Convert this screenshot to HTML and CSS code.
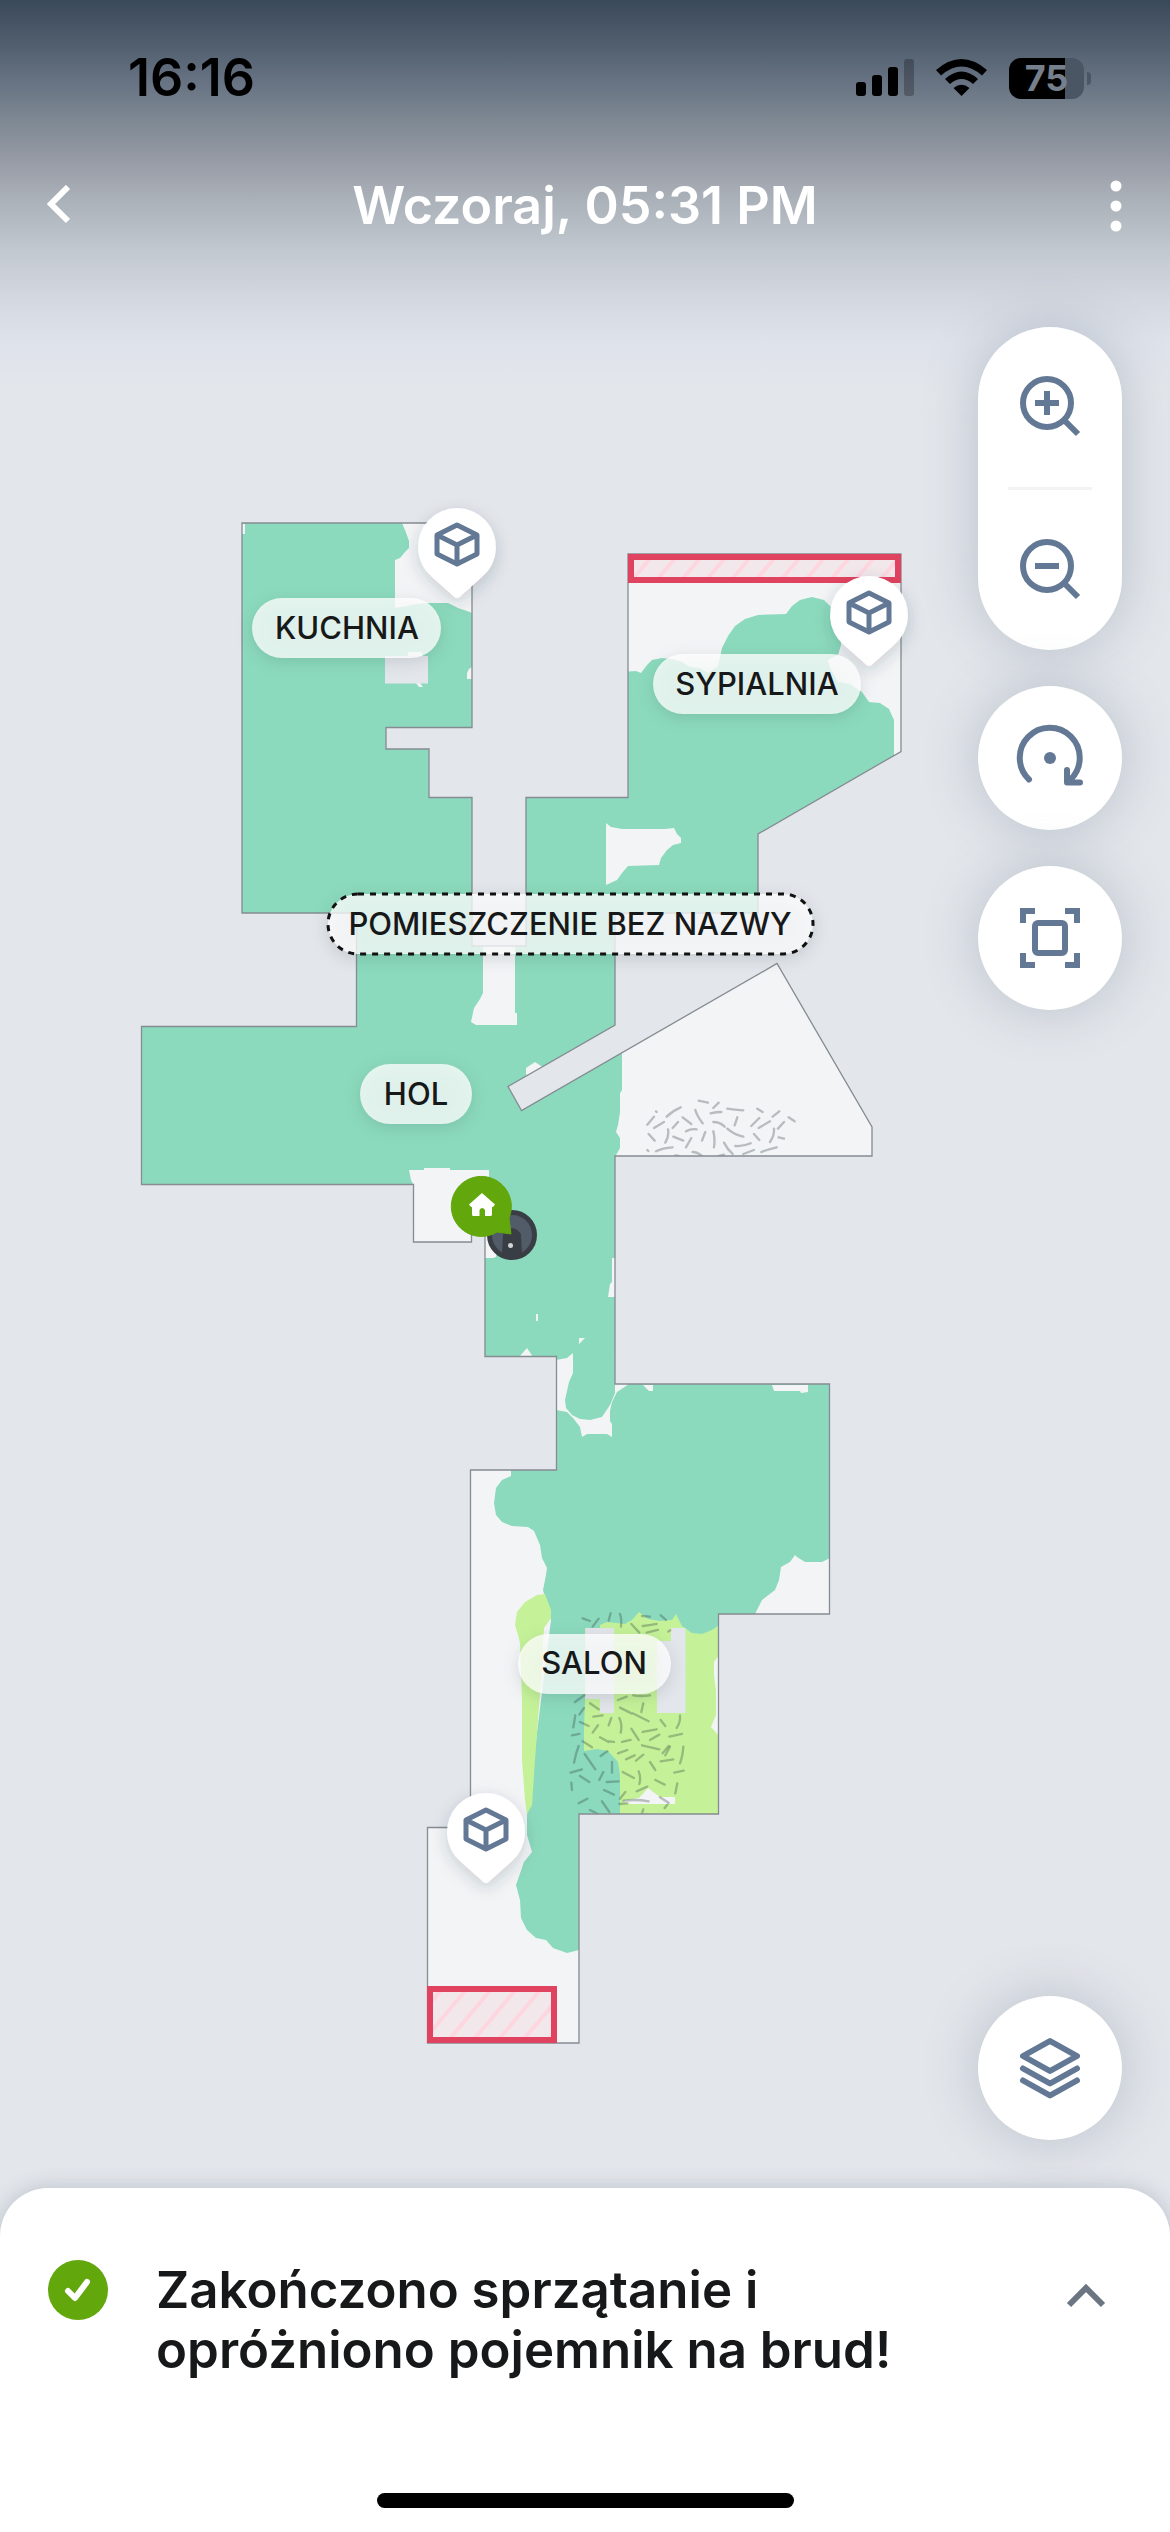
FILE: index.html
```html
<!DOCTYPE html>
<html lang="pl">
<head>
<meta charset="utf-8">
<meta name="viewport" content="width=device-width, initial-scale=1">
<title>Historia sprzątania</title>
<link rel="stylesheet" href="styles.css">
</head>
<body>
<div class="screen">
  <header class="top">
    <div class="status">
      <span class="time">16:16</span>
      <div class="indicators">
        <svg width="58" height="38" viewBox="0 0 58 38" aria-hidden="true">
          <rect x="0" y="23" width="10" height="14" rx="3"/>
          <rect x="16" y="16" width="10" height="21" rx="3"/>
          <rect x="32" y="8" width="10" height="29" rx="3"/>
          <rect x="48" y="0" width="10" height="37" rx="3" opacity=".25"/>
        </svg>
        <svg width="51" height="38" viewBox="0 0 51 38" aria-hidden="true">
          <path d="M0 11Q25.500-11 51 11L46 16.500Q25.500-1.500 5 16.500Z"/>
          <path d="M9 20Q25.500 5 42 20L37 25Q25.500 15 14 25Z"/>
          <path d="M17.500 29Q25.500 22.500 33.500 29L25.500 37Z"/>
        </svg>
        <div class="battery">
          <span class="battery-body"><span class="level">75</span></span>
          <span class="battery-cap"></span>
        </div>
      </div>
    </div>
    <nav class="nav">
      <button class="nav-btn" aria-label="Wstecz">
        <svg width="24" height="42" viewBox="0 0 24 42"><path d="M21 2L4 19L21 36" fill="none" stroke="#fff" stroke-width="6"/></svg>
      </button>
      <h1 class="title">Wczoraj, 05:31 PM</h1>
      <button class="nav-btn nav-end" aria-label="Więcej">
        <svg width="14" height="54" viewBox="0 0 14 54" fill="#fff"><circle cx="7" cy="7" r="5.500"/><circle cx="7" cy="27" r="5.500"/><circle cx="7" cy="47" r="5.500"/></svg>
      </button>
    </nav>
  </header>

  <main class="main">
    <svg class="map" viewBox="0 256 1170 1932" role="img" aria-label="Mapa mieszkania">
      <defs>
        <path id="outline" d="M242 523H472V727.500H386V749H429V797.500H472V946H526V797.500H628V554H901V751.500L758 834V913H615V1025L508 1086.500L521.500 1110.500L777 963.500L872 1127V1156H615V1384H829.500V1614H718.500V1814H579V2043H427.500V1827.500H470.500V1470H556.500V1356.500H485V1225H471.500V1242H413.500V1184.500H141.500V1026.500H356.500V913H242Z"/>
        <clipPath id="floor"><use href="#outline"/></clipPath>
        <pattern id="hatch" width="19" height="19" patternUnits="userSpaceOnUse" patternTransform="rotate(40)">
          <rect width="19" height="19" fill="#f2e8eb"/>
          <rect width="4" height="19" fill="#fdd6e0"/>
        </pattern>
        <filter id="soft" x="-40%" y="-60%" width="180%" height="220%">
          <feDropShadow dx="0" dy="5" stdDeviation="8" flood-color="#1b3346" flood-opacity=".2"/>
        </filter>
        <g id="box-pin">
          <path d="M-25 30A39 39 0 1 1 25 30L2.500 50Q0 52-2.500 50Z" fill="#fff" filter="url(#soft)"/>
          <path d="M0-22L20-12V7L0 17L-20 7V-12ZM-20-12L0-2L20-12M0-2V17" fill="none" stroke="#637894" stroke-width="5" stroke-linejoin="round"/>
        </g>
      </defs>

      <g clip-path="url(#floor)">
        <rect class="clean" x="140" y="520" width="770" height="1530"/>

        <g class="missed">
          <path d="M402 523L405 530L409 541V548L405 552L400 558L395 560V608L406 606L415 604L430 603H448L458 608L467 611L472 613V523Z"/>
          <path d="M242 524H245V534H242ZM408 652H422V657H408ZM472 667L469 669L467 673V679H472ZM416 683H420L423 687H419Z"/>
          <path d="M628 671.500L636 671L641 673L647 665L652 660L662 658L672 659L682 662L690 667L700 668L708 673L718 666L722 648L728 636L735 626L745 619L758 615L786 614L792 606L800 600L812 597L824 600L832 608L840 625L841 645L838 655L828 660L830 668L838 682L850 684L862 692L869 702L880 703L889 709L894 720V755L901 756V554H628Z"/>
          <path d="M606 823L611 827L622 829H665L674 828L677 834L681 838V843L673 845L667 850L661 858L659 865L628 866L622 873L617 880L606 885Z"/>
          <path d="M483 946H515V1013H517V1025H476L471 1022L474 1008L480 999L483 993Z"/>
          <path d="M526 1068L535 1062L544 1068L530 1078L526 1074Z"/>
          <path d="M622 1040V1090L620 1093V1112L618 1125L616 1132L620 1138V1148L615 1157H875V950H700Z"/>
          <path d="M409 1170L424 1170L424 1168H450V1170H489V1176L485 1190H497V1240L496 1257L493 1258H485V1245H413V1184L411 1180Z"/>
          <path d="M612 1258H615V1297H608L610 1284L612 1282ZM536 1314H538V1321H536ZM579 1338H585L579 1344ZM519 1357L527 1348L533 1357Z"/>
          <path d="M556 1360L567 1358L573 1353V1373L569 1382L565 1400L566 1408L572 1415L580 1419L590 1420L602 1417L610 1405L615 1393V1384H629L617 1392L612 1402L610 1411V1421L612 1424V1437L607 1434H587L582 1437L580 1427L573 1418L567 1412L556 1410Z"/>
          <path d="M643 1385H653V1391H649ZM772 1385H808V1392L801 1393L800 1391H774Z"/>
          <path d="M470 1470H511V1476L502 1480L496 1488L494 1503L496 1515L502 1522L512 1526L528 1527L534 1531L540 1545L542 1558L547 1568L546 1575L543 1590L551 1620L527 1813V1835L532 1852L524 1862L516 1885L520 1900L521 1918L527 1930L536 1938L546 1940L553 1948L567 1953L579 1950V2045H420V1470Z"/>
          <path d="M830 1558L822 1562L805 1562L797 1557L795 1555L790 1562L781 1567L779 1580L775 1590L762 1600L755 1614H830Z"/>
        </g>

        <g class="extra">
          <path d="M545 1594L537 1595L525 1602L517 1612L515 1625L518 1635L520 1643L522 1700V1760L525 1800L527 1814L532 1805L535 1760L538 1720L541 1680L544 1628L551 1618V1610Z"/>
          <path d="M600 1625L607 1622L625 1624L632 1620L639 1612L648 1619L660 1621L672 1620L676 1614L682 1626L692 1633L702 1634L712 1630L719 1625V1815H620V1775L618 1762L608 1751L597 1749L584 1751L584 1730L585 1700V1628H600Z"/>
        </g>
        <path class="missed" d="M719 1655L714 1662V1675L716 1690V1715L711 1727L719 1736ZM622 1801L639 1798L648 1788L660 1797H675V1804H630Z"/>

        <g class="furniture">
          <path d="M385 656H428V683.500H385Z"/>
          <path d="M585.500 1628H614V1713H600V1699H585.500ZM671 1628H685.500V1713H657V1641H671Z"/>
        </g>

        <g class="carpet" transform="translate(420 1360) scale(.3333)">
          <path d="M488 775l22 8M518 800l18-24M566 782l6-22M600 762q6 15 3 38M666 768l24 2M722 766l16 14M634 792l24 26M668 798q20-1 42-6M680 818l34-8M745 815l6-4M465 1026l28-20M594 1020l26-10M640 1006q25 4 50 0M510 1030l26 18M600 1043l36 18M638 1060l48 24M664 1056l6-26M520 1070l28-4M460 1102l6-36M478 1064l14-20M480 1086l26 12M518 1118l16-22M566 1096l8-22M598 1074q10 20 4 44M722 1080l14 18M770 1104q12-18 10-38M634 1106l22 34M668 1116l42-8M748 1130l38-8M456 1126l22-4M540 1132l26 14M568 1144l14 2M606 1146l26-6M690 1140l28-16M488 1144l28 18M666 1156l52 12M736 1186l14-26"/>
        </g>
        <g class="carpet" transform="translate(410 1680) scale(.3333)">
          <path d="M492 248q6-30 14-50M524 222l32 46M572 228l20-14M624 220l28-10M648 238l26-12M678 242l22-18M720 246l16 24M752 244l38-6M810 250q8-20 10-50M482 278l34-10M510 288l28 18M568 300l12-24M606 246v32M590 306l36-2M638 276l34 18M686 274q8 20 2 38M736 300l28 14M793 278l28-6M484 308l2 22M582 330l30 14M680 334l32-14M630 356l16-20M796 340l6-30M506 370l26-14M576 364l22 32M540 390l24 12M640 362q40-5 76 2M750 352l26 16M628 372l24-2M696 400l4-12M764 384l8-10M758 220l18-22"/>
        </g>
        <g class="carpet" transform="translate(480 900) scale(.3333)">
          <path d="M656 602l28 6M700 624l16-16M528 634l2 2M560 650q18-18 42-28M502 674l20-24M608 652l26 20M646 630q4 16 22 40M692 640q16-4 32-4M742 626q20 4 48 5M832 626l16 10M878 650l20-16M926 652l18 12M522 684l30-18M578 684l16-18M700 666q20 0 34 14M764 676l8-24M814 678l24-24M836 684l34-20M894 686l18-20M618 694q14-8 32-6M506 702l18 20M556 728q12-20 8-40M580 710l30 12M666 722l10-26M700 694q6 24 2 48M742 686q20 18 48 24M822 702l16 18M870 726q14-20 12-40M896 712l16 4M618 742l16-28M766 738q24 2 46-8M732 728q10 20 26 34M528 754q20-10 50-12M502 750l3 3M790 762l32-12M844 756q20-8 46-14M638 756q14 0 28 12M586 766l10 2M716 768l16-4"/>
        </g>
      </g>
      <use class="wall" href="#outline"/>

      <rect class="no-go" x="631" y="557" width="267" height="23"/>
      <rect class="no-go" x="430" y="1989" width="124" height="51"/>

      <circle cx="512" cy="1235" r="22.500" fill="#525c68" stroke="#393e45" stroke-width="5"/>
      <path d="M502 1254L503 1234Q512 1222 521 1234L522 1254Q512 1258 502 1254Z" fill="#393e45"/>
      <circle cx="510.500" cy="1245.500" r="2.500" fill="#d2d5d8"/>
      <path d="M511 1234L497 1232A30 30 0 1 1 509 1218Z" fill="#62a70c" stroke="#62a70c" stroke-linejoin="round"/>
      <path d="M482 1193L495 1204.500L493 1207H492V1214.500Q492 1216 490.500 1216H485V1210Q482 1206 479.500 1210V1216H473.500Q472 1216 472 1214.500V1207H471L469 1204.500Z" fill="#fff"/>

      <use href="#box-pin" x="457" y="547"/>
      <use href="#box-pin" x="869" y="615"/>
      <use href="#box-pin" x="486" y="1832"/>

      <g class="room">
        <rect x="252" y="598" width="189" height="60" rx="30"/><text x="347" y="639">KUCHNIA</text>
        <rect x="653" y="654" width="208" height="60" rx="30"/><text x="757" y="695">SYPIALNIA</text>
        <rect x="360" y="1064" width="112" height="60" rx="30"/><text x="416" y="1105">HOL</text>
        <rect x="518" y="1634" width="153" height="60" rx="30"/><text x="594" y="1674">SALON</text>
        <rect class="unnamed" x="328" y="894" width="485" height="60" rx="30"/><text x="570" y="935">POMIESZCZENIE BEZ NAZWY</text>
      </g>
    </svg>

    <div class="tools">
      <div class="tool-group">
        <button class="tool" aria-label="Powiększ">
          <svg viewBox="0 0 72 72"><circle cx="33" cy="32" r="24"/><path d="M33 20V44M21 32H45M51 50L64 63"/></svg>
        </button>
        <hr class="divider">
        <button class="tool" aria-label="Pomniejsz">
          <svg viewBox="0 0 72 72"><circle cx="33" cy="32" r="24"/><path d="M21 32H45M51 50L64 63"/></svg>
        </button>
      </div>
      <button class="tool round" aria-label="Obróć">
        <svg viewBox="0 0 72 72" stroke-linecap="round" stroke-linejoin="round"><circle class="solid" cx="36" cy="36" r="6"/><path d="M15 57.500A30 30 0 1 1 57 57L54 60M53 48V60.500H66"/></svg>
      </button>
      <button class="tool round" aria-label="Dopasuj mapę">
        <svg viewBox="0 0 72 72"><rect x="21" y="21" width="30" height="30" rx="3"/><path d="M9 21V9H21M51 9H63V21M63 51V63H51M21 63H9V51"/></svg>
      </button>
      <button class="tool round last" aria-label="Warstwy">
        <svg viewBox="0 0 72 72" stroke-linecap="round" stroke-linejoin="round"><path d="M36 9L63 24L36 39L9 24ZM9 36.500L36 51.500L63 36.500M9 48.500L36 63.500L63 48.500"/></svg>
      </button>
    </div>
  </main>

  <section class="sheet">
    <div class="sheet-row">
      <svg class="done" viewBox="0 0 60 60" aria-hidden="true"><circle cx="30" cy="30" r="30" fill="#62a70c"/><path d="M20 31L27 38L39 22" fill="none" stroke="#fff" stroke-width="6" stroke-linecap="round" stroke-linejoin="round"/></svg>
      <h2 class="message">Zakończono sprzątanie i opróżniono pojemnik na brud!</h2>
      <button class="expand" aria-label="Rozwiń">
        <svg width="40" height="26" viewBox="0 0 40 26"><path d="M3 22L20 5L37 22" fill="none" stroke="#6b7682" stroke-width="6"/></svg>
      </button>
    </div>
    <div class="home-bar"></div>
  </section>
</div>
</body>
</html>
```
FILE: styles.css
```css
* { box-sizing: border-box; }

body {
  margin: 0;
  background: #e3e6eb;
  color: #171819;
  font-family: Inter, "Liberation Sans", sans-serif;
}

button {
  border: 0;
  padding: 0;
  background: none;
  font: inherit;
  cursor: pointer;
}

svg { display: block; }

.screen {
  display: flex;
  flex-direction: column;
  min-height: 100vh;
  background: linear-gradient(#3a495a 0, #4e5c6c 40px, #667282 80px, #7e8993 122px, #9599a4 157px, #abb1b9 200px, #c2c8d0 250px, #d4d8e1 300px, #dee2ea 340px, #e3e6eb 390px);
}

/* Status bar and navigation */
.status {
  display: flex;
  align-items: center;
  justify-content: space-between;
  height: 156px;
  padding: 0 79px 0 128px;
}

.time {
  color: #000;
  font-size: 52px;
  font-weight: 600;
  line-height: 60px;
}

.indicators {
  display: flex;
  align-items: center;
  gap: 22px;
}

.battery {
  display: flex;
  align-items: center;
  gap: 3px;
}

.battery-body {
  width: 75px;
  height: 41px;
  border-radius: 12px;
  background: linear-gradient(90deg, #000 75%, #4b5665 75%);
  text-align: center;
}

.level {
  color: #75808c;
  font-size: 36px;
  font-weight: 700;
  line-height: 41px;
}

.battery-cap {
  width: 4px;
  height: 13px;
  border-radius: 0 4px 4px 0;
  background: #4b5665;
}

.nav {
  display: grid;
  grid-template-columns: 1fr auto 1fr;
  align-items: center;
  height: 100px;
  padding: 0 47px;
}

.nav-btn { justify-self: start; }
.nav-end { justify-self: end; }

.title {
  margin: 0;
  color: #fff;
  font-size: 52px;
  font-weight: 600;
  line-height: 60px;
}

/* Map */
.main {
  position: relative;
  flex: 1;
}

.map {
  width: 100%;
  height: auto;
}

.clean { fill: #8cdabd; }
.missed { fill: #f3f4f6; }
.extra { fill: #c5f298; }
.furniture { fill: #e3e6eb; }

.carpet {
  fill: none;
  stroke: #1e2a32;
  stroke-opacity: .28;
  stroke-width: 7;
  stroke-linecap: round;
}

.wall {
  fill: none;
  stroke: #858c92;
  stroke-width: 1.3;
}

.no-go {
  fill: url(#hatch);
  stroke: #e0435f;
  stroke-width: 6;
}

.room rect {
  fill: #fff;
  fill-opacity: .77;
  filter: drop-shadow(0 4px 8px rgba(20, 50, 60, .18));
}

.room .unnamed {
  stroke: #111;
  stroke-width: 3;
  stroke-dasharray: 6 6;
}

.room text {
  fill: #171819;
  font-size: 31px;
  font-weight: 500;
  text-anchor: middle;
}

.tools {
  position: absolute;
  top: 71px;
  right: 48px;
  bottom: 48px;
  display: flex;
  flex-direction: column;
  gap: 36px;
  width: 144px;
}

.tool-group,
.round {
  background: #fff;
  box-shadow: 0 0 54px rgba(90, 105, 130, .3);
}

.tool-group { border-radius: 72px; }

.tool {
  display: grid;
  place-items: center;
  width: 100%;
  height: 160px;
}

.tool svg {
  width: 72px;
  height: 72px;
  fill: none;
  stroke: #637894;
  stroke-width: 6;
}

.tool .solid {
  fill: #637894;
  stroke: none;
}

.round {
  height: 144px;
  border-radius: 50%;
}

.last { margin-top: auto; }

.divider {
  width: 84px;
  height: 3px;
  margin: 0 auto;
  border: 0;
  background: #f3f3f4;
}

/* Result sheet */
.sheet {
  position: relative;
  display: flex;
  flex-direction: column;
  justify-content: space-between;
  min-height: 344px;
  padding: 72px 64px 24px 48px;
  border-radius: 48px 48px 0 0;
  background: #fff;
  box-shadow: 0 0 20px rgba(90, 105, 130, .3);
}

.sheet-row {
  display: grid;
  grid-template-columns: 60px 1fr 40px;
  align-items: start;
  column-gap: 48px;
}

.message {
  max-width: 800px;
  margin: 0;
  font-size: 51px;
  font-weight: 600;
  line-height: 60px;
}

.expand {
  display: grid;
  place-items: center;
  height: 72px;
}

.home-bar {
  align-self: center;
  width: 417px;
  height: 15px;
  margin-left: -16px;
  margin-right: -32px;
  border-radius: 8px;
  background: #000;
}
```
